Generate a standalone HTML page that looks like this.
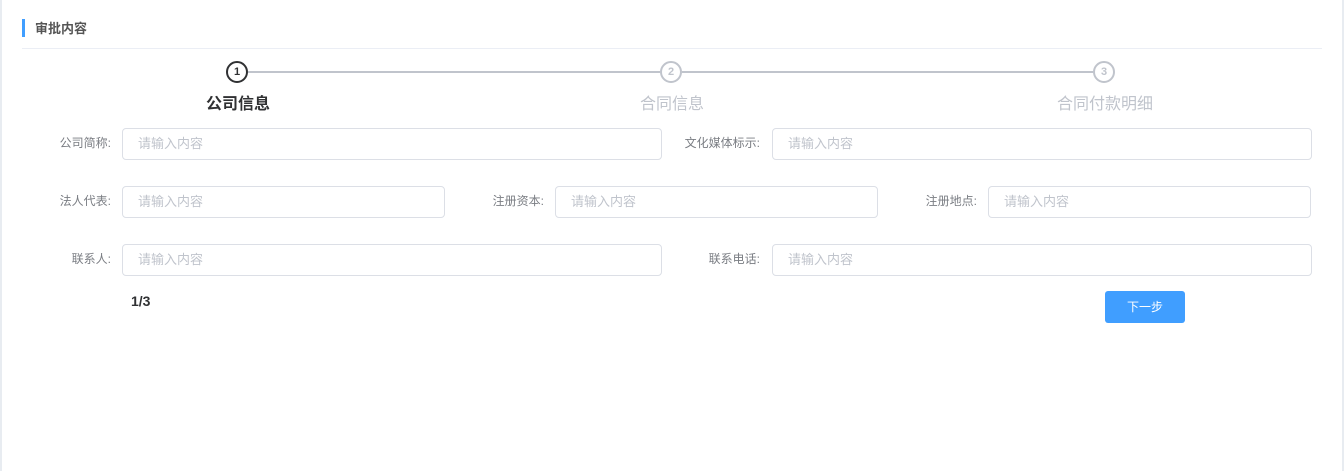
<!DOCTYPE html>
<html><head><meta charset="utf-8"><style>
body{margin:0;width:1344px;height:471px;background:#fff;position:relative;overflow:hidden;font-family:"Liberation Sans","Noto Sans CJK SC",sans-serif}
.a{position:absolute}
.inp{position:absolute;height:30px;border:1px solid #dcdfe6;border-radius:4px;box-sizing:content-box;font-size:13px;color:#c0c4cc;line-height:30px;padding-left:15px}
.lb{position:absolute;font-size:12px;color:#7a7d83;text-align:right;line-height:31px}
.c{position:absolute;width:18px;height:18px;border:2px solid #c0c4cc;border-radius:50%;background:#fff;font-size:11px;font-weight:bold;color:#c0c4cc;text-align:center;line-height:18px}
.st{position:absolute;font-size:16px;color:#c0c4cc;text-align:center;width:200px}
</style></head><body>
<div class="a" style="left:0;top:0;width:2px;height:471px;background:#e8ecf1"></div>
<div class="a" style="left:1342px;top:0;width:2px;height:471px;background:#e8ecf1"></div>
<div class="a" style="left:22px;top:19px;width:3px;height:18px;background:#409eff"></div>
<div class="a" style="left:35px;top:19px;font-size:13px;font-weight:bold;color:#555;line-height:20px">审批内容</div>
<div class="a" style="left:22px;top:48px;width:1300px;height:1px;background:#ebeef5"></div>
<div class="a" style="left:248px;top:71px;width:412px;height:2px;background:#c0c4cc"></div>
<div class="a" style="left:682px;top:71px;width:411px;height:2px;background:#c0c4cc"></div>
<div class="c" style="left:226px;top:61px;border-color:#303133;color:#303133">1</div>
<div class="c" style="left:660px;top:61px">2</div>
<div class="c" style="left:1093px;top:61px">3</div>
<div class="st" style="left:138px;top:90px;color:#303133;font-weight:bold">公司信息</div>
<div class="st" style="left:572px;top:90px">合同信息</div>
<div class="st" style="left:1005px;top:90px">合同付款明细</div>

<div class="lb" style="left:0;width:111px;top:128px">公司简称:</div>
<div class="inp" style="left:122px;top:128px;width:523px">请输入内容</div>
<div class="lb" style="left:600px;width:160px;top:128px">文化媒体标示:</div>
<div class="inp" style="left:772px;top:128px;width:523px">请输入内容</div>

<div class="lb" style="left:0;width:111px;top:186px">法人代表:</div>
<div class="inp" style="left:122px;top:186px;width:306px">请输入内容</div>
<div class="lb" style="left:400px;width:144px;top:186px">注册资本:</div>
<div class="inp" style="left:555px;top:186px;width:306px">请输入内容</div>
<div class="lb" style="left:800px;width:177px;top:186px">注册地点:</div>
<div class="inp" style="left:988px;top:186px;width:306px">请输入内容</div>

<div class="lb" style="left:0;width:111px;top:244px">联系人:</div>
<div class="inp" style="left:122px;top:244px;width:523px">请输入内容</div>
<div class="lb" style="left:600px;width:160px;top:244px">联系电话:</div>
<div class="inp" style="left:772px;top:244px;width:523px">请输入内容</div>

<div class="a" style="left:131px;top:291px;font-size:14px;font-weight:bold;color:#303133;line-height:20px">1/3</div>
<div class="a" style="left:1105px;top:291px;width:80px;height:32px;background:#409eff;border-radius:3px;color:#fff;font-size:12px;text-align:center;line-height:32px">下一步</div>
</body></html>
